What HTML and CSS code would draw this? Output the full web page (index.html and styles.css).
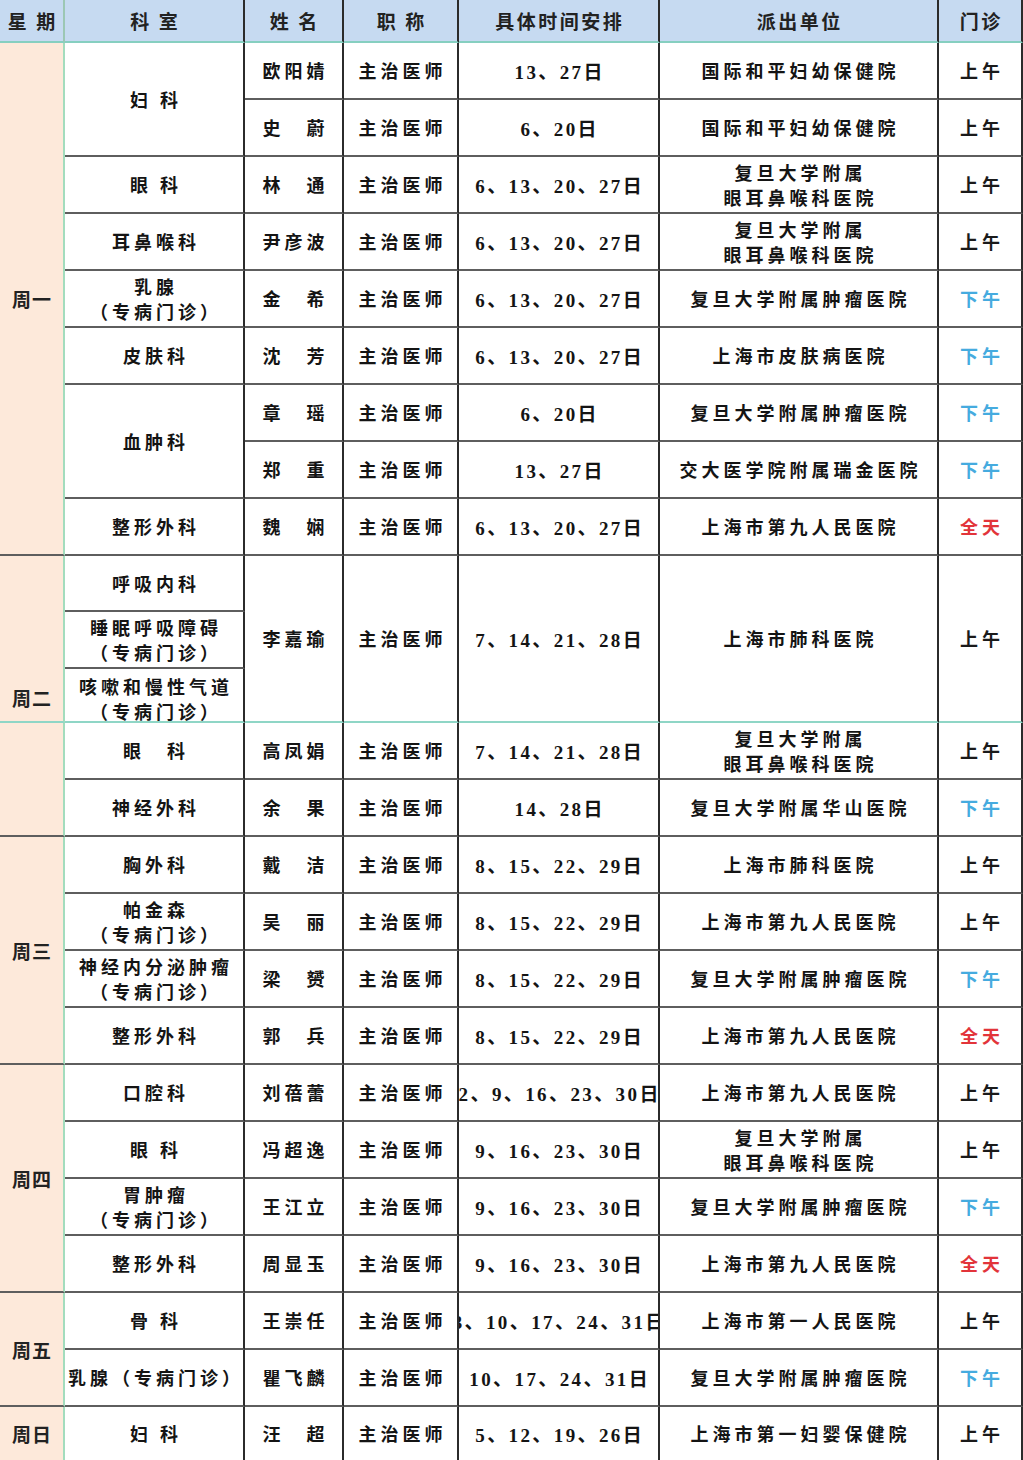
FILE: index.html
```html
<!DOCTYPE html>
<html lang="zh-CN">
<head>
<meta charset="utf-8">
<title>专家门诊安排表</title>
<link rel="stylesheet" href="styles.css">
</head>
<body>
<div class="sheet">
  <div class="c h hday">星 期</div>
  <div class="c h">科 室</div>
  <div class="c h">姓 名</div>
  <div class="c h">职 称</div>
  <div class="c h">具体时间安排</div>
  <div class="c h">派出单位</div>
  <div class="c h hlast">门诊</div>

  <!-- 周一 -->
  <div class="c day rs9">周一</div>
  <div class="c t rs2">妇 科</div>
  <div class="c t">欧阳婧</div>
  <div class="c t">主治医师</div>
  <div class="c n">13、27日</div>
  <div class="c t">国际和平妇幼保健院</div>
  <div class="c t am">上午</div>

  <div class="c t">史　蔚</div>
  <div class="c t">主治医师</div>
  <div class="c n">6、20日</div>
  <div class="c t">国际和平妇幼保健院</div>
  <div class="c t am">上午</div>

  <div class="c t">眼 科</div>
  <div class="c t">林　通</div>
  <div class="c t">主治医师</div>
  <div class="c n">6、13、20、27日</div>
  <div class="c t">复旦大学附属<br>眼耳鼻喉科医院</div>
  <div class="c t am">上午</div>

  <div class="c t">耳鼻喉科</div>
  <div class="c t">尹彦波</div>
  <div class="c t">主治医师</div>
  <div class="c n">6、13、20、27日</div>
  <div class="c t">复旦大学附属<br>眼耳鼻喉科医院</div>
  <div class="c t am">上午</div>

  <div class="c t">乳腺<br>（专病门诊）</div>
  <div class="c t">金　希</div>
  <div class="c t">主治医师</div>
  <div class="c n">6、13、20、27日</div>
  <div class="c t">复旦大学附属肿瘤医院</div>
  <div class="c t pm">下午</div>

  <div class="c t">皮肤科</div>
  <div class="c t">沈　芳</div>
  <div class="c t">主治医师</div>
  <div class="c n">6、13、20、27日</div>
  <div class="c t">上海市皮肤病医院</div>
  <div class="c t pm">下午</div>

  <div class="c t rs2">血肿科</div>
  <div class="c t">章　瑶</div>
  <div class="c t">主治医师</div>
  <div class="c n">6、20日</div>
  <div class="c t">复旦大学附属肿瘤医院</div>
  <div class="c t pm">下午</div>

  <div class="c t">郑　重</div>
  <div class="c t">主治医师</div>
  <div class="c n">13、27日</div>
  <div class="c t">交大医学院附属瑞金医院</div>
  <div class="c t pm">下午</div>

  <div class="c t">整形外科</div>
  <div class="c t">魏　娴</div>
  <div class="c t">主治医师</div>
  <div class="c n">6、13、20、27日</div>
  <div class="c t">上海市第九人民医院</div>
  <div class="c t all">全天</div>

  <!-- 周二 -->
  <div class="c day rs3 day-low seam">周二</div>
  <div class="c t">呼吸内科</div>
  <div class="c t rs3 seam">李嘉瑜</div>
  <div class="c t rs3 seam">主治医师</div>
  <div class="c n rs3 seam">7、14、21、28日</div>
  <div class="c t rs3 seam">上海市肺科医院</div>
  <div class="c t am rs3 seam">上午</div>

  <div class="c t">睡眠呼吸障碍<br>（专病门诊）</div>
  <div class="c t top seam">咳嗽和慢性气道<br>（专病门诊）</div>

  <div class="c day rs2"></div>
  <div class="c t">眼　科</div>
  <div class="c t">高凤娟</div>
  <div class="c t">主治医师</div>
  <div class="c n">7、14、21、28日</div>
  <div class="c t">复旦大学附属<br>眼耳鼻喉科医院</div>
  <div class="c t am">上午</div>

  <div class="c t">神经外科</div>
  <div class="c t">余　果</div>
  <div class="c t">主治医师</div>
  <div class="c n">14、28日</div>
  <div class="c t">复旦大学附属华山医院</div>
  <div class="c t pm">下午</div>

  <!-- 周三 -->
  <div class="c day rs4">周三</div>
  <div class="c t">胸外科</div>
  <div class="c t">戴　洁</div>
  <div class="c t">主治医师</div>
  <div class="c n">8、15、22、29日</div>
  <div class="c t">上海市肺科医院</div>
  <div class="c t am">上午</div>

  <div class="c t">帕金森<br>（专病门诊）</div>
  <div class="c t">吴　丽</div>
  <div class="c t">主治医师</div>
  <div class="c n">8、15、22、29日</div>
  <div class="c t">上海市第九人民医院</div>
  <div class="c t am">上午</div>

  <div class="c t">神经内分泌肿瘤<br>（专病门诊）</div>
  <div class="c t">梁　赟</div>
  <div class="c t">主治医师</div>
  <div class="c n">8、15、22、29日</div>
  <div class="c t">复旦大学附属肿瘤医院</div>
  <div class="c t pm">下午</div>

  <div class="c t">整形外科</div>
  <div class="c t">郭　兵</div>
  <div class="c t">主治医师</div>
  <div class="c n">8、15、22、29日</div>
  <div class="c t">上海市第九人民医院</div>
  <div class="c t all">全天</div>

  <!-- 周四 -->
  <div class="c day rs4">周四</div>
  <div class="c t">口腔科</div>
  <div class="c t">刘蓓蕾</div>
  <div class="c t">主治医师</div>
  <div class="c n">2、9、16、23、30日</div>
  <div class="c t">上海市第九人民医院</div>
  <div class="c t am">上午</div>

  <div class="c t">眼 科</div>
  <div class="c t">冯超逸</div>
  <div class="c t">主治医师</div>
  <div class="c n">9、16、23、30日</div>
  <div class="c t">复旦大学附属<br>眼耳鼻喉科医院</div>
  <div class="c t am">上午</div>

  <div class="c t">胃肿瘤<br>（专病门诊）</div>
  <div class="c t">王江立</div>
  <div class="c t">主治医师</div>
  <div class="c n">9、16、23、30日</div>
  <div class="c t">复旦大学附属肿瘤医院</div>
  <div class="c t pm">下午</div>

  <div class="c t">整形外科</div>
  <div class="c t">周显玉</div>
  <div class="c t">主治医师</div>
  <div class="c n">9、16、23、30日</div>
  <div class="c t">上海市第九人民医院</div>
  <div class="c t all">全天</div>

  <!-- 周五 -->
  <div class="c day rs2">周五</div>
  <div class="c t">骨 科</div>
  <div class="c t">王崇任</div>
  <div class="c t">主治医师</div>
  <div class="c n">3、10、17、24、31日</div>
  <div class="c t">上海市第一人民医院</div>
  <div class="c t am">上午</div>

  <div class="c t">乳腺（专病门诊）</div>
  <div class="c t">瞿飞麟</div>
  <div class="c t">主治医师</div>
  <div class="c n">10、17、24、31日</div>
  <div class="c t">复旦大学附属肿瘤医院</div>
  <div class="c t pm">下午</div>

  <!-- 周日 -->
  <div class="c day last">周日</div>
  <div class="c t last">妇 科</div>
  <div class="c t last">汪　超</div>
  <div class="c t last">主治医师</div>
  <div class="c n last">5、12、19、26日</div>
  <div class="c t last">上海市第一妇婴保健院</div>
  <div class="c t am last">上午</div>
</div>
</body>
</html>
```

FILE: styles.css
```css
html, body {
  margin: 0;
  padding: 0;
  background: #ffffff;
}

.sheet {
  display: grid;
  width: 1023px;
  grid-template-columns: 65px 180px 99px 115px 201px 279px 84px;
  grid-template-rows: 43px repeat(9, 57px) 56px 57px 54px repeat(12, 57px) 53px;
  font-family: "Noto Sans CJK SC", sans-serif;
  color: #141414;
}

.c {
  box-sizing: border-box;
  display: flex;
  align-items: center;
  justify-content: center;
  text-align: center;
  white-space: nowrap;
  overflow: hidden;
  border-right: 2px solid #2b2b2b;
  border-bottom: 2px solid #5e5e5e;
  min-width: 0;
}

.h {
  background: #c6daf1;
  border-bottom: 2px solid #86cfc0;
  font-weight: 700;
  font-size: 19px;
  letter-spacing: 2.5px;
  padding-left: 2.5px;
  color: #222;
}

.hday {
  border-right: 2px solid #9cc7b4;
}

.t {
  font-size: 18px;
  font-weight: 600;
  letter-spacing: 4px;
  padding-left: 4px;
  line-height: 25px;
}

.n {
  font-family: "Liberation Serif", "Noto Sans CJK SC", serif;
  font-weight: 700;
  font-size: 19px;
  letter-spacing: 2.4px;
  padding-left: 2.4px;
}

.day {
  background: #fde9da;
  border-right: 2px solid #a3dcbd;
  font-size: 19px;
  font-weight: 700;
  letter-spacing: 1px;
  padding-left: 1px;
  color: #222;
}

.day-low {
  align-items: flex-end;
  padding-bottom: 10px;
}

.top {
  align-items: flex-start;
  padding-top: 5px;
}

.seam {
  border-bottom-color: #8fd6c6;
}

.rs2 { grid-row: span 2; }
.rs3 { grid-row: span 3; }
.rs4 { grid-row: span 4; }
.rs9 { grid-row: span 9; }

.am { color: #1a1a1a; }
.pm { color: #45abdf; }
.all { color: #e2343a; }

.last {
  border-bottom: none;
}
```
